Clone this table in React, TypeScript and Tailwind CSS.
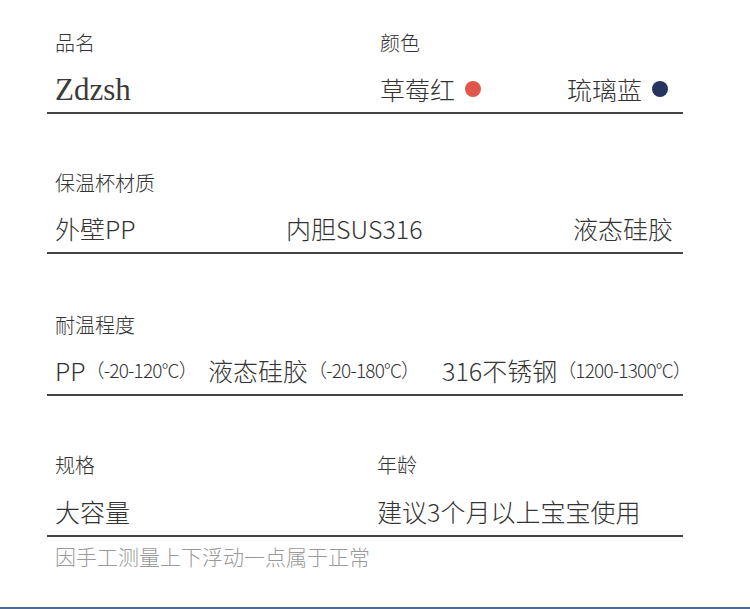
const cjk = { fontFamily: '"Noto Sans CJK SC", "Noto Sans", sans-serif' };

function Label({ children }: { children: React.ReactNode }) {
  return <div className="h-[30px] leading-[30px] text-[20px] font-light text-[#333]">{children}</div>;
}

function Value({ children, className = '' }: { children: React.ReactNode; className?: string }) {
  return (
    <div className={`h-[40px] leading-[40px] text-[25px] font-light text-[#333] ${className}`}>{children}</div>
  );
}

function Dot({ color }: { color: string }) {
  return <span className="inline-block w-4 h-4 rounded-full ml-[10px]" style={{ backgroundColor: color }} />;
}

function Temp({ main, range }: { main: string; range: string }) {
  return (
    <span className="flex items-center whitespace-nowrap">
      <span>{main}</span>
      <span className="text-[19px] tracking-[-0.8px]">（{range}）</span>
    </span>
  );
}

export default function App() {
  return (
    <div className="w-[750px] h-[609px] bg-white flex flex-col" style={cjk}>
      <div className="ml-[47px] w-[636px]">
        {/* 品名 / 颜色 */}
        <div className="pt-[28px] pb-[3px] border-b-2 border-[#444] grid grid-cols-[325px_288px] pl-[8px]">
          <div>
            <Label>品名</Label>
            <Value className="mt-[11px]">
              <span
                style={{ fontFamily: '"Liberation Serif", serif' }}
                className="block pt-[3px] text-[31px] leading-[36px] text-[#3a3a3a]"
              >
                Zdzsh
              </span>
            </Value>
          </div>
          <div>
            <Label>颜色</Label>
            <Value className="mt-[11px] flex items-center justify-between">
              <span className="flex items-center">
                草莓红
                <Dot color="#e0574a" />
              </span>
              <span className="flex items-center">
                琉璃蓝
                <Dot color="#24365f" />
              </span>
            </Value>
          </div>
        </div>

        {/* 保温杯材质 */}
        <div className="pt-[54px] pb-[4px] border-b-2 border-[#444] pl-[8px] pr-[10px]">
          <Label>保温杯材质</Label>
          <Value className="mt-[10px] flex justify-between">
            <span>外壁PP</span>
            <span>内胆SUS316</span>
            <span>液态硅胶</span>
          </Value>
        </div>

        {/* 耐温程度 */}
        <div className="pt-[56px] pb-[4px] border-b-2 border-[#444] pl-[8px]">
          <Label>耐温程度</Label>
          <Value className="mt-[10px] grid grid-cols-[153px_234px_1fr]">
            <Temp main="PP" range="-20-120°C" />
            <Temp main="液态硅胶" range="-20-180°C" />
            <Temp main="316不锈钢" range="1200-1300°C" />
          </Value>
        </div>

        {/* 规格 / 年龄 */}
        <div className="pt-[54px] pb-[4px] border-b-2 border-[#444] grid grid-cols-[322px_1fr] pl-[8px]">
          <div>
            <Label>规格</Label>
            <Value className="mt-[11px]">大容量</Value>
          </div>
          <div>
            <Label>年龄</Label>
            <Value className="mt-[11px]">建议3个月以上宝宝使用</Value>
          </div>
        </div>

        <div className="mt-[4px] pl-[8px] h-[30px] leading-[30px] text-[21px] font-light text-[#999]">
          因手工测量上下浮动一点属于正常
        </div>
      </div>

      <div className="mt-auto h-[2px] bg-[#4b6a94]" />
    </div>
  );
}
